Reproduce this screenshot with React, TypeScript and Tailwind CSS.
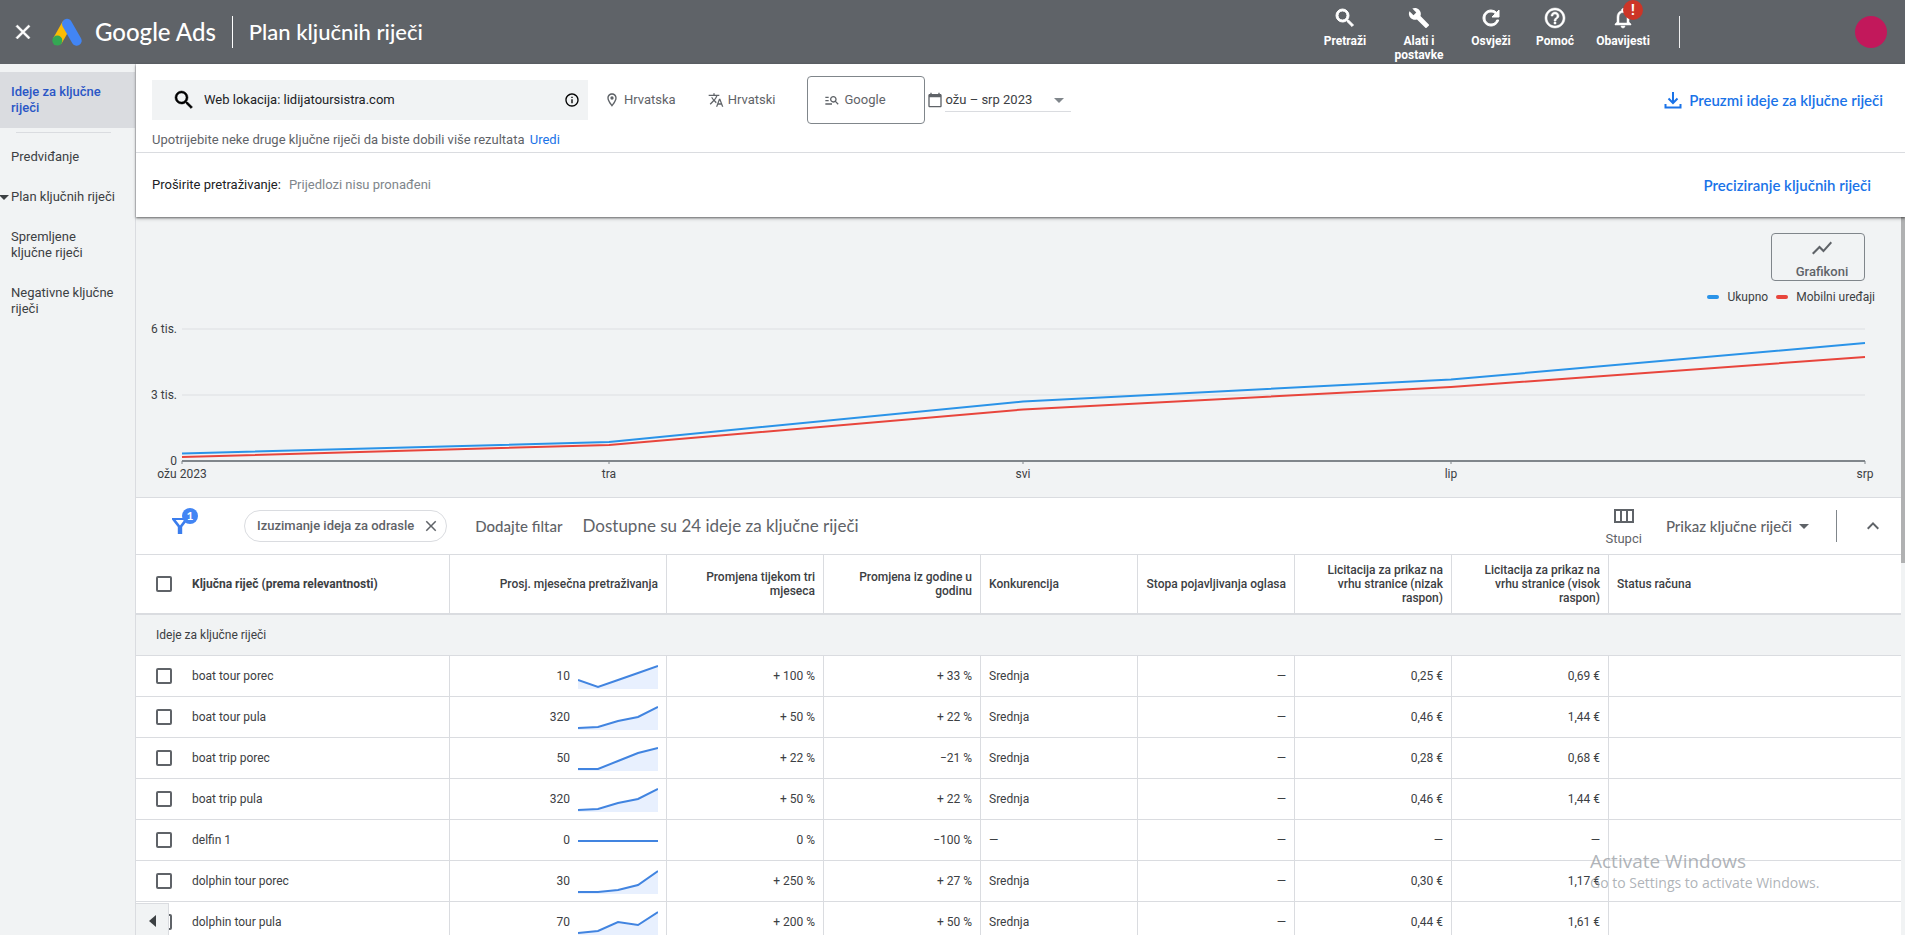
import React from 'react'
import {
  MdArrowDropDown,
  MdBuild,
  MdCalendarToday,
  MdClose,
  MdExpandLess,
  MdHelpOutline,
  MdInfoOutline,
  MdManageSearch,
  MdNotificationsNone,
  MdOutlineLocationOn,
  MdRefresh,
  MdSearch,
  MdShowChart,
  MdTranslate
} from 'react-icons/md'

interface KeywordRow {
  keyword: string
  searches: string
  trend: number[]
  threeMonth: string
  yearly: string
  competition: string
  share: string
  lowBid: string
  highBid: string
}

// trend values are y offsets inside the 80x26 sparkline box
const rows: KeywordRow[] = [
  { keyword: 'boat tour porec', searches: '10', trend: [17, 24, 17, 10, 3], threeMonth: '+ 100 %', yearly: '+ 33 %', competition: 'Srednja', share: '—', lowBid: '0,25 €', highBid: '0,69 €' },
  { keyword: 'boat tour pula', searches: '320', trend: [24, 23, 17, 13, 3], threeMonth: '+ 50 %', yearly: '+ 22 %', competition: 'Srednja', share: '—', lowBid: '0,46 €', highBid: '1,44 €' },
  { keyword: 'boat trip porec', searches: '50', trend: [24, 24, 16, 8, 3], threeMonth: '+ 22 %', yearly: '−21 %', competition: 'Srednja', share: '—', lowBid: '0,28 €', highBid: '0,68 €' },
  { keyword: 'boat trip pula', searches: '320', trend: [24, 23, 17, 13, 3], threeMonth: '+ 50 %', yearly: '+ 22 %', competition: 'Srednja', share: '—', lowBid: '0,46 €', highBid: '1,44 €' },
  { keyword: 'delfin 1', searches: '0', trend: [], threeMonth: '0 %', yearly: '−100 %', competition: '—', share: '—', lowBid: '—', highBid: '—' },
  { keyword: 'dolphin tour porec', searches: '30', trend: [24, 24, 22, 17, 3], threeMonth: '+ 250 %', yearly: '+ 27 %', competition: 'Srednja', share: '—', lowBid: '0,30 €', highBid: '1,17 €' },
  { keyword: 'dolphin tour pula', searches: '70', trend: [24, 22, 13, 16, 3], threeMonth: '+ 200 %', yearly: '+ 50 %', competition: 'Srednja', share: '—', lowBid: '0,44 €', highBid: '1,61 €' }
]

// thickens a material icon; its first path is only the empty bounding box
const heavy = 'stroke-current stroke-1 [&>path:first-child]:stroke-none'

function AdsLogo() {
  return (
    <svg viewBox="0 0 32 28" className="h-7 w-8" aria-hidden="true">
      <path d="M11.600 3.600 2 20.400l8.600 5L20 9z" fill="#fbbc04" />
      <path d="M20.400 3.400 30 20.200a5 5 0 0 1-8.700 5L11.700 8.400a5 5 0 0 1 8.700-5z" fill="#4285f4" />
      <circle cx="6.300" cy="22.600" r="5" fill="#34a853" />
    </svg>
  )
}

interface HeaderActionProps {
  label: string
  className: string
  icon: React.ReactNode
}

function HeaderAction({ label, className, icon }: HeaderActionProps) {
  return (
    <button type="button" className={`flex flex-col items-center gap-1.5 pt-2 text-xs leading-[14px] font-bold ${className}`}>
      <span className="relative flex h-5 items-center justify-center">{icon}</span>
      <span>{label}</span>
    </button>
  )
}

function Header() {
  return (
    <header className="flex h-16 items-center bg-[#5f6368] text-white">
      <button type="button" aria-label="Zatvori" className="ml-[11px]">
        <MdClose className="size-6 stroke-current stroke-[0.5] [&>path:first-child]:stroke-none" />
      </button>
      <div className="ml-4 flex items-center gap-3">
        <AdsLogo />
        <span className="font-[Lato,sans-serif] text-2xl leading-8 font-medium">Google Ads</span>
      </div>
      <div className="mx-4 h-8 w-px bg-white" />
      <h1 className="font-[Lato,sans-serif] text-[22px] leading-8 font-medium">Plan ključnih riječi</h1>
      <div className="ml-auto flex h-16 items-start">
        <HeaderAction label="Pretraži" className="w-16" icon={<MdSearch className={`size-6 ${heavy}`} />} />
        <HeaderAction label="Alati i postavke" className="ml-1 w-[76px] px-2" icon={<MdBuild className="size-[22px]" />} />
        <HeaderAction label="Osvježi" className="ml-0.5 w-16" icon={<MdRefresh className={`size-6 ${heavy}`} />} />
        <HeaderAction label="Pomoć" className="w-16" icon={<MdHelpOutline className="size-6 stroke-current stroke-[0.5] [&>path:first-child]:stroke-none" />} />
        <HeaderAction
          label="Obavijesti"
          className="w-[72px]"
          icon={
            <>
              <MdNotificationsNone className="size-6 stroke-current stroke-[0.5] [&>path:first-child]:stroke-none" />
              <span className="absolute -top-2 left-3 flex size-5 items-center justify-center rounded-full bg-[#cc3527] text-sm">!</span>
            </>
          }
        />
        <div className="mt-4 ml-5 h-8 w-px bg-white/90" />
      </div>
      <button type="button" aria-label="Račun" className="mr-[18px] ml-[175px] size-8 rounded-full bg-[#c2185b]" />
    </header>
  )
}

function Sidebar() {
  return (
    <nav className="w-[136px] shrink-0 border-r border-[#dadce0] pt-2 text-[13px] leading-4 text-[#3c4043]">
      <a href="#ideje" className="flex h-14 items-center bg-[#dadce0] pr-4 pl-[11px] font-medium text-[#2a56c6]">
        Ideje za ključne riječi
      </a>
      <div className="mx-4 my-1 mr-6 h-px bg-[#dadce0]" />
      <a href="#predvidanje" className="flex h-10 items-center pl-[11px]">
        Predviđanje
      </a>
      <a href="#plan" className="relative flex h-10 items-center pl-[11px] whitespace-nowrap">
        <MdArrowDropDown className="absolute -left-2 size-6" />
        Plan ključnih riječi
      </a>
      <a href="#spremljene" className="flex h-14 items-center pr-6 pl-[11px]">
        Spremljene ključne riječi
      </a>
      <a href="#negativne" className="flex h-14 items-center pr-4 pl-[11px]">
        Negativne ključne riječi
      </a>
    </nav>
  )
}

function SearchPanel() {
  return (
    <section className="relative z-10 bg-white text-[13px] leading-4 shadow-[0_1px_2px_rgba(0,0,0,0.5),0_2px_4px_rgba(0,0,0,0.15)]">
      <div className="h-[89px] border-b border-[#dadce0] px-4">
        <div className="flex h-[72px] items-center">
          <label className="flex h-10 w-[436px] items-center bg-[#f1f3f4] pr-2 pl-5">
            <MdSearch className="size-6 stroke-black stroke-[0.5] text-black [&>path:first-child]:stroke-none" />
            <input
              type="text"
              aria-label="Web lokacija"
              defaultValue="Web lokacija: lidijatoursistra.com"
              className="ml-2 flex-1 bg-transparent text-[#202124] outline-none"
            />
            <MdInfoOutline className="size-4 text-black" />
          </label>
          <button type="button" className="ml-4 flex items-center gap-1 text-[#5f6368]">
            <MdOutlineLocationOn className="size-4" />
            Hrvatska
          </button>
          <button type="button" className="ml-8 flex items-center gap-1 text-[#5f6368]">
            <MdTranslate className="size-4" />
            Hrvatski
          </button>
          <button type="button" className="ml-8 flex h-12 w-[118px] items-center gap-1 rounded border border-[#80868b] pl-4 text-[#5f6368]">
            <MdManageSearch className="size-4" />
            Google
          </button>
          <MdCalendarToday className="ml-0.5 size-4 text-[#5f6368]" />
          <button type="button" className="ml-0.5 flex h-6 w-[126px] items-center justify-between border-b border-[#dadce0] text-[#3c4043]">
            ožu – srp 2023
            <MdArrowDropDown className="size-6 text-[#80868b]" />
          </button>
          <a href="#preuzmi" className="mr-1.5 ml-auto flex items-center gap-1 font-[Lato,sans-serif] text-[15px] font-semibold text-[#1a73e8]">
            <svg viewBox="0 0 24 24" className="size-6" fill="none" stroke="currentColor" strokeWidth="2">
              <path d="M12 4v11M7.500 10.500 12 15l4.500-4.500M4.500 16v3.500h15V16" />
            </svg>
            Preuzmi ideje za ključne riječi
          </a>
        </div>
        <p className="-mt-1 text-[#5f6368]">
          Upotrijebite neke druge ključne riječi da biste dobili više rezultata{' '}
          <a href="#uredi" className="ml-0.5 text-[#1a73e8]">Uredi</a>
        </p>
      </div>
      <div className="flex h-16 items-center pr-[34px] pl-4">
        <span className="text-[#202124]">Proširite pretraživanje:</span>
        <span className="ml-2 text-[#80868b]">Prijedlozi nisu pronađeni</span>
        <a href="#preciziranje" className="ml-auto font-[Lato,sans-serif] text-[15px] font-semibold text-[#1a73e8]">
          Preciziranje ključnih riječi
        </a>
      </div>
    </section>
  )
}

const months = [
  { label: 'ožu 2023', x: 182 },
  { label: 'tra', x: 609 },
  { label: 'svi', x: 1023 },
  { label: 'lip', x: 1451 },
  { label: 'srp', x: 1865 }
]

function TrendChart() {
  return (
    <svg viewBox="136 313 1765 184" className="block w-full" role="img" aria-label="Trend pretraživanja">
      <path d="M182 329H1865M182 395H1865" stroke="#e4e6e8" strokeWidth="1.500" />
      <path d="M182 461H1865" stroke="#80868b" strokeWidth="2" />
      {months.map(m => (
        <path key={m.label} d={`M${m.x} 461v3`} stroke="#80868b" strokeWidth="1" />
      ))}
      <path d="M182 457 609 445 1023 409.500 1451 387 1865 357" fill="none" stroke="#e8453c" strokeWidth="2" />
      <path d="M182 453.500 609 442 1023 401.500 1451 379.500 1865 343" fill="none" stroke="#2a93e8" strokeWidth="2" />
      <g className="fill-[#3c4043] text-xs">
        <text x="177" y="333" textAnchor="end">6 tis.</text>
        <text x="177" y="399" textAnchor="end">3 tis.</text>
        <text x="177" y="465" textAnchor="end">0</text>
        {months.map(m => (
          <text key={m.label} x={m.x} y="478" textAnchor="middle">{m.label}</text>
        ))}
      </g>
    </svg>
  )
}

function ChartSection() {
  return (
    <section className="border-b border-[#dadce0] text-[#5f6368]">
      <div className="flex justify-end pt-4 pr-9">
        <button type="button" className="flex h-12 w-[94px] flex-col items-center justify-between rounded border border-[#80868b] pt-0.5 pl-2 text-[13px] leading-4 font-medium">
          <MdShowChart className="size-6" />
          Grafikoni
        </button>
      </div>
      <div className="flex h-8 items-center justify-end pr-[26px] text-xs text-[#3c4043]">
        <span className="mr-2 h-1 w-3 rounded-sm bg-[#2a93e8]" />
        Ukupno
        <span className="mr-2 ml-2 h-1 w-3 rounded-sm bg-[#e8453c]" />
        Mobilni uređaji
      </div>
      <TrendChart />
    </section>
  )
}

function Toolbar() {
  return (
    <div className="flex h-14 items-center bg-white font-[Lato,sans-serif] text-[15px] text-[#5f6368]">
      <button type="button" aria-label="Filtri" className="relative ml-9">
        <svg viewBox="0 0 16 16" className="size-4" fill="#3b7ded" fillRule="evenodd">
          <path d="M0 0h16v1.500L10.200 9v7H5.800V9L0 1.500zM3.700 2h8.600L8 7.500z" />
        </svg>
        <span className="absolute -top-2.5 left-2.5 flex size-4 items-center justify-center rounded-full bg-[#4285f4] text-xs font-bold text-white">1</span>
      </button>
      <div className="ml-14 flex h-8 items-center gap-2 rounded-full border border-[#dadce0] pr-1.5 pl-3 font-[Roboto,sans-serif] text-[13px] font-medium">
        Izuzimanje ideja za odrasle
        <button type="button" aria-label="Ukloni filtar">
          <MdClose className="size-[18px]" />
        </button>
      </div>
      <button type="button" className="ml-7 font-medium">Dodajte filtar</button>
      <span className="ml-5 text-[17px]">Dostupne su 24 ideje za ključne riječi</span>
      <button type="button" className="mt-1 ml-auto flex flex-col items-center gap-2 font-[Roboto,sans-serif] text-[13px] leading-4">
        <svg viewBox="0 0 20 14" className="h-3.5 w-5" fill="none" stroke="#5f6368" strokeWidth="2">
          <path d="M1 1h18v12H1zM7 1v12M13 1v12" />
        </svg>
        Stupci
      </button>
      <button type="button" className="ml-6 flex items-center font-medium">
        Prikaz ključne riječi
        <MdArrowDropDown className="size-6" />
      </button>
      <div className="mx-5 mr-6 h-8 w-px bg-[#80868b]" />
      <button type="button" aria-label="Sažmi" className="mr-4">
        <MdExpandLess className="size-6" />
      </button>
    </div>
  )
}

function Sparkline({ points }: { points: number[] }) {
  if (points.length === 0) {
    return (
      <svg viewBox="0 0 80 26" className="h-[26px] w-20">
        <path d="M0 14H80" stroke="#4184e0" strokeWidth="2" />
      </svg>
    )
  }
  const line = points.map((y, i) => `${i * 20},${y}`).join(' ')
  return (
    <svg viewBox="0 0 80 26" className="h-[26px] w-20">
      <polygon points={`0,26 ${line} 80,26`} fill="#e8f0fe" />
      <polyline points={line} fill="none" stroke="#4184e0" strokeWidth="2" />
    </svg>
  )
}

function Check({ label }: { label: string }) {
  return (
    <input
      type="checkbox"
      aria-label={label}
      className="block size-4 shrink-0 appearance-none rounded-xs border-2 border-[#5f6368] bg-white checked:bg-[#1a73e8]"
    />
  )
}

const headCell = 'border-r border-[#dadce0] px-2 font-medium'
const cell = 'border-r border-[#dadce0] px-2'

function KeywordTable() {
  return (
    <table className="w-full table-fixed border-separate border-spacing-0 border-t border-[#dadce0] bg-white text-xs text-[#3c4043]">
      <colgroup>
        <col className="w-[314px]" />
        <col className="w-[217px]" />
        <col className="w-[157px]" />
        <col className="w-[157px]" />
        <col className="w-[157px]" />
        <col className="w-[157px]" />
        <col className="w-[157px]" />
        <col className="w-[157px]" />
        <col />
      </colgroup>
      <thead>
        <tr className="h-[60px] text-right leading-[14px] [&>th]:border-b-2 [&>th]:border-b-[#dadce0]">
          <th scope="col" className="border-r border-[#dadce0] pl-5 text-left font-bold">
            <div className="flex items-center gap-5">
              <Check label="Odaberi sve" />
              Ključna riječ (prema relevantnosti)
            </div>
          </th>
          <th scope="col" className={headCell}>Prosj. mjesečna pretraživanja</th>
          <th scope="col" className={headCell}>Promjena tijekom tri mjeseca</th>
          <th scope="col" className={headCell}>Promjena iz godine u godinu</th>
          <th scope="col" className={`${headCell} text-left`}>Konkurencija</th>
          <th scope="col" className={`${headCell} whitespace-nowrap`}>Stopa pojavljivanja oglasa</th>
          <th scope="col" className={headCell}>Licitacija za prikaz na vrhu stranice (nizak raspon)</th>
          <th scope="col" className={headCell}>Licitacija za prikaz na vrhu stranice (visok raspon)</th>
          <th scope="col" className="px-2 text-left font-medium">Status računa</th>
        </tr>
      </thead>
      <tbody className="text-right [&_td]:border-b [&_td]:border-b-[#dadce0]">
        <tr className="h-[41px] bg-[#f1f3f4]">
          <td colSpan={9} className="pl-5 text-left">Ideje za ključne riječi</td>
        </tr>
        {rows.map(row => (
          <tr key={row.keyword} className="h-[41px]">
            <td className="border-r border-[#dadce0] pl-5 text-left">
              <div className="flex items-center gap-5">
                <Check label={row.keyword} />
                {row.keyword}
              </div>
            </td>
            <td className={cell}>
              <div className="flex items-center justify-end gap-2">
                {row.searches}
                <Sparkline points={row.trend} />
              </div>
            </td>
            <td className={cell}>{row.threeMonth}</td>
            <td className={cell}>{row.yearly}</td>
            <td className={`${cell} text-left`}>{row.competition}</td>
            <td className={cell}>{row.share}</td>
            <td className={cell}>{row.lowBid}</td>
            <td className={cell}>{row.highBid}</td>
            <td />
          </tr>
        ))}
      </tbody>
    </table>
  )
}

export default function App() {
  return (
    <div className="relative flex h-screen flex-col overflow-hidden bg-[#f1f3f4] font-[Roboto,sans-serif]">
      <Header />
      <div className="flex min-h-0 flex-1">
        <Sidebar />
        <main className="flex min-w-0 flex-1 flex-col">
          <SearchPanel />
          <div className="flex min-h-0 flex-1">
            <div className="min-w-0 flex-1 overflow-hidden">
              <ChartSection />
              <Toolbar />
              <KeywordTable />
            </div>
            <div className="w-1">
              <div className="h-[346px] bg-[#b0b1b2]" />
            </div>
          </div>
        </main>
      </div>
      <button
        type="button"
        aria-label="Pomakni ulijevo"
        className="absolute -bottom-1 left-[136px] flex h-9 w-[33px] items-center justify-center border border-l-0 border-[#dadce0] bg-[#f1f3f4]"
      >
        <svg viewBox="0 0 7 12" className="h-3 w-[7px]" fill="#3c4043">
          <path d="M7 0v12L0 6z" />
        </svg>
      </button>
      <div className="pointer-events-none absolute right-[79px] bottom-[42px] w-[236px] font-['Open_Sans',sans-serif] whitespace-nowrap text-[#9aa0a6]/80">
        <p className="text-[19px] leading-6">Activate Windows</p>
        <p className="text-sm leading-5">Go to Settings to activate Windows.</p>
      </div>
    </div>
  )
}
